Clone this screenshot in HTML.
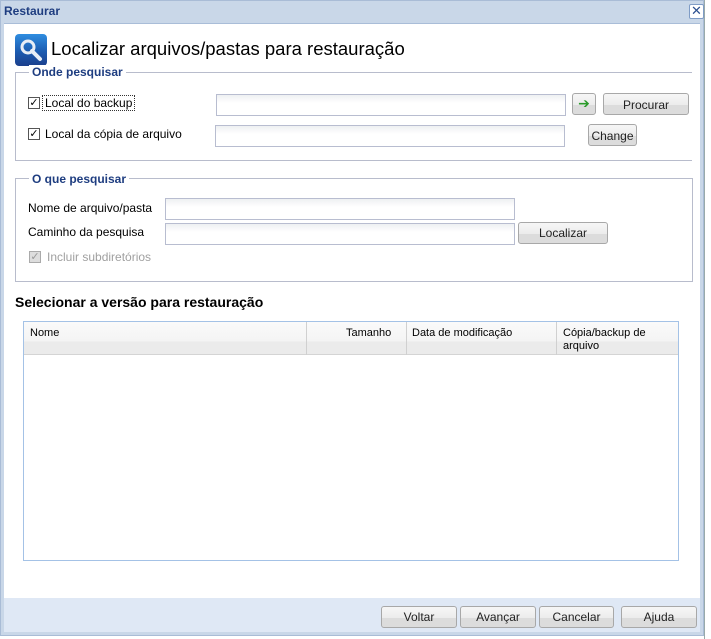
<!DOCTYPE html>
<html><head><meta charset="utf-8"><style>
*{margin:0;padding:0;box-sizing:border-box}
body{width:711px;height:639px;overflow:hidden;background:#fff;font-family:"Liberation Sans","DejaVu Sans",sans-serif;font-size:12px;color:#000;position:relative}
.a{position:absolute}
.win{left:0;top:0;width:704px;height:636px;background:#c9d7e8;border:1px solid #a9bcd6}
.content{left:4px;top:23px;width:696px;height:575px;background:#fff;border-top:1px solid #a9bdd8}
.footer{left:4px;top:598px;width:696px;height:34px;background:#dfe8f5}
.inp{position:absolute;border:1px solid #b8bdd0;background:linear-gradient(#eef0f2,#fff 40%)}
.btn{position:absolute;border:1px solid #a8a8a8;border-radius:3px;background:linear-gradient(#f6f6f6 0,#ececec 55%,#dcdcdc 56%,#dcdcdc 100%);text-align:center;font-size:12px;color:#222}
.cb{position:absolute;width:12px;height:12px;border:1px solid #555;background:#fff;font-size:11px;line-height:10px;text-align:center;font-weight:bold}
.leg{position:absolute;background:#fff;color:#1e3d80;font-weight:bold;padding:0 3px}
.gl{position:absolute;background:#b8bccc}
</style></head><body>
<div class="a win"></div>
<div class="a" style="left:4px;top:4px;color:#1e3d80;font-weight:bold;font-size:12px">Restaurar</div>
<div class="a" style="left:689px;top:4px;width:15px;height:15px;border:1px solid #7f9cc6;background:#fff;border-radius:2px;color:#2b4f8f;font-size:13px;line-height:12px;text-align:center">✕</div>
<div class="a" style="left:704px;top:0;width:7px;height:639px;background:#fff;border-left:1px solid #9aa"></div>
<div class="a content"></div>
<div class="a footer"></div>
<!-- icon -->
<div class="a" style="left:15px;top:34px;width:32px;height:32px;border-radius:4px;background:linear-gradient(#2f8de0,#1c5bb0 55%,#1b3f8c)">
<svg width="32" height="32"><circle cx="13" cy="13" r="6" fill="none" stroke="#e8eef6" stroke-width="3"/><line x1="17" y1="17" x2="25" y2="25" stroke="#e8eef6" stroke-width="4" stroke-linecap="round"/></svg></div>
<div class="a" style="left:51px;top:38px;font-size:18.5px">Localizar arquivos/pastas para restauração</div>
<!-- group1 -->
<div class="gl" style="left:15px;top:72px;width:677px;height:1px"></div>
<div class="gl" style="left:15px;top:72px;width:1px;height:89px"></div>
<div class="gl" style="left:15px;top:160px;width:677px;height:1px"></div>
<div class="leg" style="left:29px;top:65px">Onde pesquisar</div>
<div class="cb" style="left:28px;top:97px">✓</div>
<div class="a" style="left:42px;top:95px;border:1px dotted #333;padding:0 2px;height:16px">Local do backup</div>
<div class="inp" style="left:216px;top:94px;width:350px;height:22px"></div>
<div class="btn" style="left:572px;top:93px;width:24px;height:22px;color:#2a9a2a;font-weight:bold;font-size:14px;line-height:19px">➔</div>
<div class="btn" style="left:603px;top:93px;width:86px;height:22px;line-height:22px">Procurar</div>
<div class="cb" style="left:28px;top:128px">✓</div>
<div class="a" style="left:45px;top:127px">Local da cópia de arquivo</div>
<div class="inp" style="left:215px;top:125px;width:350px;height:22px"></div>
<div class="btn" style="left:588px;top:124px;width:49px;height:22px;line-height:22px">Change</div>
<!-- group2 -->
<div class="a" style="left:15px;top:178px;width:678px;height:104px;border:1px solid #b8bccc"></div>
<div class="leg" style="left:29px;top:172px">O que pesquisar</div>
<div class="a" style="left:28px;top:201px">Nome de arquivo/pasta</div>
<div class="inp" style="left:165px;top:198px;width:350px;height:22px"></div>
<div class="a" style="left:28px;top:225px">Caminho da pesquisa</div>
<div class="inp" style="left:165px;top:223px;width:350px;height:22px"></div>
<div class="btn" style="left:518px;top:222px;width:90px;height:22px;line-height:21px">Localizar</div>
<div class="cb" style="left:29px;top:251px;border-color:#aaa;background:#ddd;color:#999">✓</div>
<div class="a" style="left:47px;top:250px;color:#a0a0a0">Incluir subdiretórios</div>
<div class="a" style="left:15px;top:294px;font-weight:bold;font-size:14px">Selecionar a versão para restauração</div>
<!-- table -->
<div class="a" style="left:23px;top:321px;width:656px;height:240px;border:1px solid #a4c2e6;background:#fff"></div>
<div class="a" style="left:24px;top:322px;width:654px;height:33px;background:linear-gradient(#fafafa 0,#f4f4f4 60%,#ebebeb 61%,#ebebeb);border-bottom:1px solid #d4d4d4"></div>
<div class="gl" style="left:306px;top:322px;width:1px;height:33px;background:#d0d0d0"></div>
<div class="gl" style="left:406px;top:322px;width:1px;height:33px;background:#d0d0d0"></div>
<div class="gl" style="left:556px;top:322px;width:1px;height:33px;background:#d0d0d0"></div>
<div class="a" style="left:30px;top:327px;font-size:11px">Nome</div>
<div class="a" style="left:346px;top:327px;font-size:11px">Tamanho</div>
<div class="a" style="left:412px;top:327px;font-size:11px">Data de modificação</div>
<div class="a" style="left:563px;top:327px;font-size:11px;line-height:13px">Cópia/backup de<br>arquivo</div>
<!-- footer buttons -->
<div class="btn" style="left:381px;top:606px;width:76px;height:22px;line-height:21px">Voltar</div>
<div class="btn" style="left:460px;top:606px;width:76px;height:22px;line-height:21px">Avançar</div>
<div class="btn" style="left:539px;top:606px;width:75px;height:22px;line-height:21px">Cancelar</div>
<div class="btn" style="left:621px;top:606px;width:76px;height:22px;line-height:21px">Ajuda</div>
</body></html>
